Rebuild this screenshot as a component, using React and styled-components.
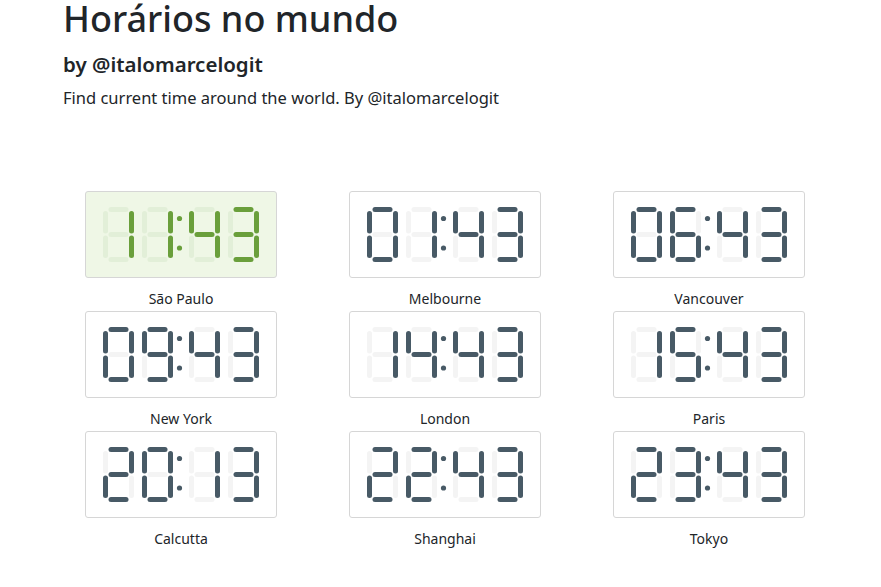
import React from "react";
import styled, { createGlobalStyle } from "styled-components";

const GlobalStyle = createGlobalStyle`
  html, body { margin: 0; padding: 0; background: #fff; }
  body {
    font-family: "Segoe UI", "Noto Sans", "Liberation Sans", sans-serif;
    color: #212529;
  }
`;

const Page = styled.div`
  padding: 0 0 0 63px;
`;

const Header = styled.header`
  display: flex;
  flex-direction: column;
`;

const Title = styled.h1`
  margin: 0;
  font-size: 36px;
  font-weight: 500;
  line-height: 1.05;
`;

const Subtitle = styled.h5`
  margin: 14px 0 0;
  font-size: 20.5px;
  font-weight: 600;
  line-height: 1.2;
`;

const Lead = styled.p`
  margin: 10px 0 0;
  font-size: 16.5px;
  line-height: 1.5;
`;

const Grid = styled.div`
  display: grid;
  grid-template-columns: repeat(3, 192px);
  column-gap: 72px;
  margin: 80px 0 0 22px;
`;

const Cell = styled.div`
  display: flex;
  flex-direction: column;
  align-items: center;
`;

const Display = styled.div`
  box-sizing: border-box;
  width: 192px;
  height: 87px;
  border: 1px solid #d6d6d6;
  border-radius: 3px;
  background: ${(p) => (p.$active ? "#eff7e6" : "#fff")};
  display: flex;
  align-items: center;
  justify-content: center;
`;

const Label = styled.div`
  height: 33px;
  padding-top: 10px;
  box-sizing: border-box;
  font-size: 14px;
  line-height: 22px;
  color: #212529;
`;

const DigitSvg = styled.svg`
  display: block;
  width: 31px;
  height: 55px;
  flex: none;
  & + & { margin-left: 8px; }
`;

const ColonSvg = styled.svg`
  display: block;
  width: 16px;
  height: 55px;
  flex: none;
`;

const SEGMENTS = {
  a: { x: 5.5, y: 0, w: 20, h: 5 },
  g: { x: 5.5, y: 25, w: 20, h: 5 },
  d: { x: 5.5, y: 50, w: 20, h: 5 },
  f: { x: 0, y: 4, w: 5, h: 22.5 },
  b: { x: 26, y: 4, w: 5, h: 22.5 },
  e: { x: 0, y: 28.5, w: 5, h: 22.5 },
  c: { x: 26, y: 28.5, w: 5, h: 22.5 },
};

const MAP = {
  0: "abcdef",
  1: "bc",
  2: "abged",
  3: "abgcd",
  4: "fgbc",
  5: "afgcd",
  6: "afgedc",
  7: "abc",
  8: "abcdefg",
  9: "abcdfg",
};

const palette = (active) =>
  active
    ? { on: "#6a9f3b", off: "#e2efd8" }
    : { on: "#485a66", off: "#f4f4f4" };

function Digit({ value, active }) {
  const lit = MAP[value];
  const c = palette(active);
  return (
    <DigitSvg viewBox="0 0 31 55">
      {Object.entries(SEGMENTS).map(([k, s]) => (
        <rect
          key={k}
          x={s.x}
          y={s.y}
          width={s.w}
          height={s.h}
          rx={2.5}
          fill={lit.includes(k) ? c.on : c.off}
        />
      ))}
    </DigitSvg>
  );
}

function Colon({ active }) {
  const c = palette(active);
  return (
    <ColonSvg viewBox="0 0 16 55">
      <circle cx={6.5} cy={11.5} r={2.6} fill={c.on} />
      <circle cx={6.5} cy={41} r={2.6} fill={c.on} />
    </ColonSvg>
  );
}

function Clock({ time, active }) {
  const [h, m] = time.split(":");
  return (
    <Display $active={active}>
      <Digit value={h[0]} active={active} />
      <Digit value={h[1]} active={active} />
      <Colon active={active} />
      <Digit value={m[0]} active={active} />
      <Digit value={m[1]} active={active} />
    </Display>
  );
}

const CITIES = [
  { name: "São Paulo", time: "11:43", active: true },
  { name: "Melbourne", time: "01:43" },
  { name: "Vancouver", time: "06:43" },
  { name: "New York", time: "09:43" },
  { name: "London", time: "14:43" },
  { name: "Paris", time: "15:43" },
  { name: "Calcutta", time: "20:13" },
  { name: "Shanghai", time: "22:43" },
  { name: "Tokyo", time: "23:43" },
];

export default function App() {
  return (
    <>
      <GlobalStyle />
      <Page>
        <Header>
          <Title>Horários no mundo</Title>
          <Subtitle>by @italomarcelogit</Subtitle>
          <Lead>Find current time around the world. By @italomarcelogit</Lead>
        </Header>
        <Grid>
          {CITIES.map((c) => (
            <Cell key={c.name}>
              <Clock time={c.time} active={c.active} />
              <Label>{c.name}</Label>
            </Cell>
          ))}
        </Grid>
      </Page>
    </>
  );
}
